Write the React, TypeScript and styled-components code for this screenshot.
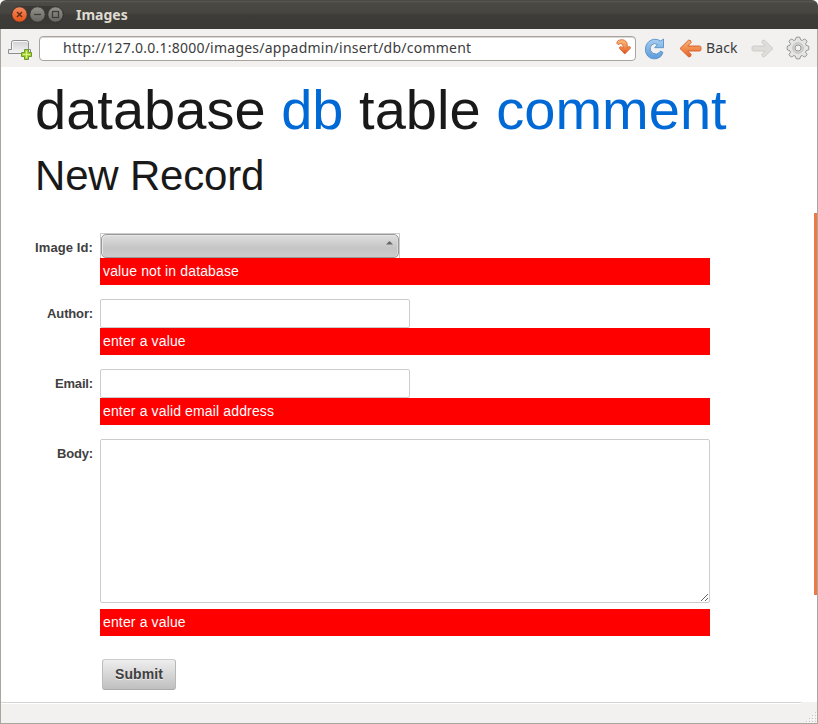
import React from "react";
import styled, { createGlobalStyle, css } from "styled-components";

const GlobalStyle = createGlobalStyle`
  * { box-sizing: border-box; }
  html, body { margin: 0; padding: 0; background: #fff; }
`;

const Window = styled.div`
  width: 818px;
  height: 724px;
  display: flex;
  flex-direction: column;
  overflow: hidden;
  background: #fff;
  font-family: "Liberation Sans", Arial, sans-serif;
`;

const TitleBar = styled.header`
  height: 29px;
  flex: none;
  display: flex;
  align-items: center;
  padding-left: 11px;
  border-radius: 6px 6px 0 0;
  background: linear-gradient(#3b3a36 0, #5a5953 1px, #4a4944 3px, #464540 13px, #3d3c38 15px, #3b3a36 29px);
`;

const WindowControls = styled.svg`
  display: block;
  flex: none;
`;

const WindowTitle = styled.h1`
  margin: 1px 0 0 12px;
  font: bold 14px/20px "Noto Sans", sans-serif;
  letter-spacing: 0;
  color: #dfdbd2;
`;

const Body = styled.div`
  flex: 1;
  min-height: 0;
  display: flex;
  flex-direction: column;
  border: 1px solid #aaa59e;
  border-top: 0;
`;

const Toolbar = styled.nav`
  height: 38px;
  flex: none;
  display: flex;
  align-items: center;
  background: #f2f1f0;
`;

const Glyph = styled.svg<{ $left?: number; $top?: number }>`
  display: block;
  flex: none;
  margin-left: ${({ $left = 0 }) => $left}px;
  margin-top: ${({ $top = 0 }) => $top}px;
`;

const AddressBar = styled.div`
  width: 597px;
  height: 25px;
  margin-left: 6px;
  padding: 0 3px 0 23px;
  display: flex;
  align-items: center;
  justify-content: space-between;
  border: 1px solid #a9a49e;
  border-radius: 4px;
  background: #fff;
  box-shadow: inset 0 1px 0 #d9d7d4;
`;

const Url = styled.span`
  font: 14px/20px "Noto Sans", sans-serif;
  letter-spacing: 0.24px;
  color: #3c3c3c;
  white-space: nowrap;
`;

const BackLabel = styled.span`
  width: 46px;
  margin-left: 4px;
  font: 14px/20px "Noto Sans", sans-serif;
  letter-spacing: 0.1px;
  color: #3c3c3c;
`;

const Viewport = styled.div`
  flex: 1;
  min-height: 0;
  display: flex;
  justify-content: space-between;
`;

const Page = styled.main`
  width: 709px;
  padding-left: 34px;
`;

const Heading = styled.h2`
  margin: 11px 0 0;
  font-size: 56px;
  line-height: 64px;
  font-weight: 400;
  letter-spacing: 0.02px;
  color: #191919;
  white-space: nowrap;
`;

const Accent = styled.span`
  color: #0069d6;
`;

const SubHeading = styled.h3`
  margin: 10px 0 0;
  font-size: 42px;
  line-height: 48px;
  font-weight: 400;
  letter-spacing: -0.2px;
  color: #191919;
`;

const Form = styled.form`
  margin-top: 33px;
`;

const Row = styled.div<{ $gap?: number }>`
  display: grid;
  grid-template-columns: 65px 610px;
  margin-bottom: ${({ $gap = 14 }) => $gap}px;
`;

const Label = styled.label<{ $tracking?: number }>`
  padding: 7px 7px 0 0;
  margin-left: -5px;
  font-size: 13px;
  line-height: 15px;
  font-weight: 700;
  letter-spacing: ${({ $tracking = -0.15 }) => $tracking}px;
  color: #404040;
  text-align: right;
  white-space: nowrap;
`;

const Field = styled.div`
  display: flex;
  flex-direction: column;
  align-items: flex-start;
`;

const fieldBorder = css`
  border: 1px solid #ccc;
  border-radius: 2px;
  background: #fff;
`;

const TextInput = styled.input`
  ${fieldBorder}
  width: 310px;
  height: 29px;
  padding: 4px;
  outline: none;
`;

const TextArea = styled.textarea`
  ${fieldBorder}
  display: block;
  width: 610px;
  height: 164px;
  margin-bottom: 6px;
  outline: none;
  resize: both;
`;

const SelectFrame = styled.div`
  width: 300px;
  height: 25px;
  border: 1px solid #ccc;
  border-bottom: 0;
  background: #fff;
`;

const SelectButton = styled.button`
  display: flex;
  justify-content: flex-end;
  width: 298px;
  height: 24px;
  padding: 6px 5px 0;
  border: 1px solid #9a9a9a;
  border-radius: 5px;
  background: linear-gradient(#dedede, #c5c5c5 60%, #cdcdcd);
  box-shadow: inset 1px 1px 0 #e6e6e6, inset -1px 0 0 #dadada;
`;

const ErrorMessage = styled.div`
  width: 610px;
  height: 27px;
  padding: 0 3px;
  background: #f00;
  color: #fff;
  font-size: 14px;
  line-height: 26px;
  letter-spacing: 0.14px;
`;

const SubmitButton = styled.button`
  width: 74px;
  height: 31px;
  margin: 9px 0 0 2px;
  padding: 0 0 1px;
  border: 1px solid #c2c2c2;
  border-color: #ccc #b8b8b8 #aaa #bbb;
  border-radius: 3px;
  background: linear-gradient(#eee, #bfbfbf);
  color: #404040;
  font: bold 14px/18px "Liberation Sans", Arial, sans-serif;
  letter-spacing: 0.1px;
  text-shadow: 0 1px 1px rgba(255, 255, 255, 0.75);
`;

const ScrollThumb = styled.div`
  width: 3px;
  height: 382px;
  margin-top: 146px;
  background: #f07746;
`;

const StatusBar = styled.footer`
  height: 21px;
  flex: none;
  display: flex;
  align-items: flex-end;
  justify-content: space-between;
  background: #f2f1f0;
`;

const StatusLine = styled.div`
  width: 800px;
  height: 21px;
  border-top: 1px solid #d6d4d2;
  box-shadow: inset 0 1px 0 #fff;
`;

const TitleButtons = () => (
  <WindowControls width="53" height="20" viewBox="0 0 53 20">
    <defs>
      <linearGradient id="close" x2="0" y2="1">
        <stop stopColor="#f58b61" />
        <stop offset="1" stopColor="#e75113" />
      </linearGradient>
      <linearGradient id="control" x2="0" y2="1">
        <stop stopColor="#92918a" />
        <stop offset="1" stopColor="#66655f" />
      </linearGradient>
    </defs>
    <rect x="0" y="1" width="53" height="18" rx="9" fill="#393834" />
    <circle cx="8.5" cy="9.5" r="7.7" fill="url(#close)" stroke="#32312d" strokeWidth=".8" />
    <circle cx="26.5" cy="9.5" r="7.7" fill="url(#control)" stroke="#32312d" strokeWidth=".8" />
    <circle cx="44.5" cy="9.5" r="7.7" fill="url(#control)" stroke="#32312d" strokeWidth=".8" />
    <path d="m6 7 5 5m0-5-5 5" stroke="#5a2b16" strokeWidth="1.4" />
    <path d="M23 9.500h7" stroke="#3c3b37" strokeWidth="1.200" />
    <rect x="41.5" y="6.5" width="6" height="6" fill="none" stroke="#3c3b37" strokeWidth="1.200" />
  </WindowControls>
);

const NewTabIcon = () => (
  <Glyph $left={7} $top={3} width="25" height="21" viewBox="0 0 25 21">
    <defs>
      <linearGradient id="tab" x2="0" y2="1">
        <stop stopColor="#d0d0d0" />
        <stop offset="1" stopColor="#f5f5f5" />
      </linearGradient>
    </defs>
    <path d="M3.500 10.500v-7q0-2 2-2h13q2 0 2 2v7h2v4H.5v-4z" fill="url(#tab)" stroke="#8d8d8d" />
    <path d="M4.500 10.500v-7q0-1 1-1h13q1 0 1 1" fill="none" stroke="#f7f7f7" />
    <path d="M16.500 10.500h4v3h3v4h-3v3h-4v-3h-3v-4h3z" fill="#a9d42f" stroke="#6b982a" />
    <path d="M18.500 12v7M15 15.500h7" stroke="#d8ef8b" />
  </Glyph>
);

const GoIcon = () => (
  <Glyph $top={-2} width="16" height="16" viewBox="0 0 16 16">
    <defs>
      <linearGradient id="go" x2="0" y2="1">
        <stop stopColor="#f9bd7c" />
        <stop offset=".5" stopColor="#f39150" />
        <stop offset="1" stopColor="#e24c16" />
      </linearGradient>
    </defs>
    <path
      d="M1.200 2.500Q2.800.6 6 .7q5 .3 5.300 5.300v3l1.500-1.400q2-.3 1.600 1.600L8.800 15 3.500 9.500q-.4-2 1.500-2l2 1.700V7Q7 4.600 4.500 4.700L2 5.600Q0 4.500 1.200 2.500z"
      fill="url(#go)"
      stroke="#d4602c"
      strokeWidth=".8"
      strokeLinejoin="round"
    />
  </Glyph>
);

const ReloadIcon = () => (
  <Glyph $left={9} $top={2} width="20" height="22" viewBox="0 0 20 22">
    <defs>
      <linearGradient id="reload" x2="0" y2="1">
        <stop stopColor="#a9cdee" />
        <stop offset="1" stopColor="#5c9bd8" />
      </linearGradient>
    </defs>
    <path
      d="m15.700 3 2.800-2v8.700H9.700l2.800-3.200Q9.500 4.500 6.800 6.800 4.300 9.500 5.500 12.500q2 4 6 3.500 2.500-.5 4-3l2.500 1.500q-1.500 5-6 6-5.700 1.400-9.300-2.500-3.500-4-2-9.500 2-6 8-7.200 4-.5 7 1.700z"
      fill="url(#reload)"
      stroke="#5592cd"
      strokeWidth=".9"
      strokeLinejoin="round"
    />
  </Glyph>
);

const BackIcon = () => (
  <Glyph $left={14} $top={0} width="23" height="19" viewBox="0 0 23 19">
    <defs>
      <linearGradient id="back" x2="0" y2="1">
        <stop stopColor="#f6b57a" />
        <stop offset=".55" stopColor="#f0894a" />
        <stop offset="1" stopColor="#e75b20" />
      </linearGradient>
    </defs>
    <path
      d="m1 9.500 8.500-8.300q2.500-.5 2.700 2.300L8.800 7H20.500q1.500.2 1.500 1.500v2q0 1.300-1.500 1.500H8.800l3.400 3.500q-.2 2.800-2.700 2.300z"
      fill="url(#back)"
      stroke="#d75a27"
      strokeWidth=".9"
      strokeLinejoin="round"
    />
  </Glyph>
);

const ForwardIcon = () => (
  <Glyph $left={-1} $top={0} width="23" height="19" viewBox="0 0 23 19">
    <path
      d="m22 9.500-8.500-8.300q-2.500-.5-2.700 2.300L14.200 7H2.500Q1 7.200 1 8.500v2Q1 11.800 2.500 12h11.700l-3.400 3.500q.2 2.800 2.700 2.300z"
      fill="#deddda"
      stroke="#cbc9c6"
      strokeWidth=".9"
      strokeLinejoin="round"
    />
  </Glyph>
);

const GearIcon = () => (
  <Glyph $left={12} $top={0} width="24" height="24" viewBox="-12 -12 24 24">
    <path
      d="M-2-10.500Q0-11.500 2-10.500l.6 2.300 1.600.7L6.300-9Q8.500-8.500 9-6.300L7.500-4.200l.7 1.600 2.300.6Q11.500 0 10.500 2l-2.300.6-.7 1.600L9 6.300Q8.500 8.500 6.300 9L4.200 7.500l-1.600.7L2 10.500q-2 1-4 0l-.6-2.300-1.600-.7L-6.300 9Q-8.500 8.500-9 6.300l1.500-2.100-.7-1.600-2.300-.6q-1-2 0-4l2.300-.6.7-1.600L-9-6.300Q-8.500-8.500-6.300-9l2.100 1.500 1.600-.7z"
      fill="#e5e5e4"
      stroke="#979797"
      strokeLinejoin="round"
    />
    <circle r="5.300" fill="#d2d2d1" stroke="#c3c3c2" />
    <circle r="3" fill="#f2f1f0" stroke="#999" />
  </Glyph>
);

const ResizeGrip = () => (
  <Glyph width="11" height="11" viewBox="0 0 11 11" shapeRendering="crispEdges">
    {[0, 3, 6, 9].map((y, row) =>
      [9, 6, 3, 0].slice(0, row + 1).map((x) => (
        <React.Fragment key={`${x}-${y}`}>
          <rect x={x} y={y} width="1" height="1" fill="#cbc9c6" />
          <rect x={x + 1} y={y + 1} width="1" height="1" fill="#fff" />
        </React.Fragment>
      ))
    )}
  </Glyph>
);

export default function App() {
  return (
    <>
      <GlobalStyle />
      <Window>
        <TitleBar>
          <TitleButtons />
          <WindowTitle>Images</WindowTitle>
        </TitleBar>
        <Body>
          <Toolbar>
            <NewTabIcon />
            <AddressBar>
              <Url>http://127.0.0.1:8000/images/appadmin/insert/db/comment</Url>
              <GoIcon />
            </AddressBar>
            <ReloadIcon />
            <BackIcon />
            <BackLabel>Back</BackLabel>
            <ForwardIcon />
            <GearIcon />
          </Toolbar>
          <Viewport>
            <Page>
              <Heading>
                database <Accent>db</Accent> table <Accent>comment</Accent>
              </Heading>
              <SubHeading>New Record</SubHeading>
              <Form onSubmit={(event) => event.preventDefault()}>
                <Row>
                  <Label $tracking={0.1}>Image Id:</Label>
                  <Field>
                    <SelectFrame>
                      <SelectButton type="button">
                        <svg width="7" height="4" viewBox="0 0 7 4">
                          <path d="M0 3.500 3.500 0 7 3.500z" fill="#666" />
                        </svg>
                      </SelectButton>
                    </SelectFrame>
                    <ErrorMessage>value not in database</ErrorMessage>
                  </Field>
                </Row>
                <Row>
                  <Label htmlFor="author">Author:</Label>
                  <Field>
                    <TextInput id="author" />
                    <ErrorMessage>enter a value</ErrorMessage>
                  </Field>
                </Row>
                <Row>
                  <Label htmlFor="email">Email:</Label>
                  <Field>
                    <TextInput id="email" />
                    <ErrorMessage>enter a valid email address</ErrorMessage>
                  </Field>
                </Row>
                <Row>
                  <Label htmlFor="body">Body:</Label>
                  <Field>
                    <TextArea id="body" />
                    <ErrorMessage>enter a value</ErrorMessage>
                  </Field>
                </Row>
                <Row $gap={0}>
                  <span />
                  <Field>
                    <SubmitButton type="submit">Submit</SubmitButton>
                  </Field>
                </Row>
              </Form>
            </Page>
            <ScrollThumb />
          </Viewport>
          <StatusBar>
            <StatusLine />
            <ResizeGrip />
          </StatusBar>
        </Body>
      </Window>
    </>
  );
}
